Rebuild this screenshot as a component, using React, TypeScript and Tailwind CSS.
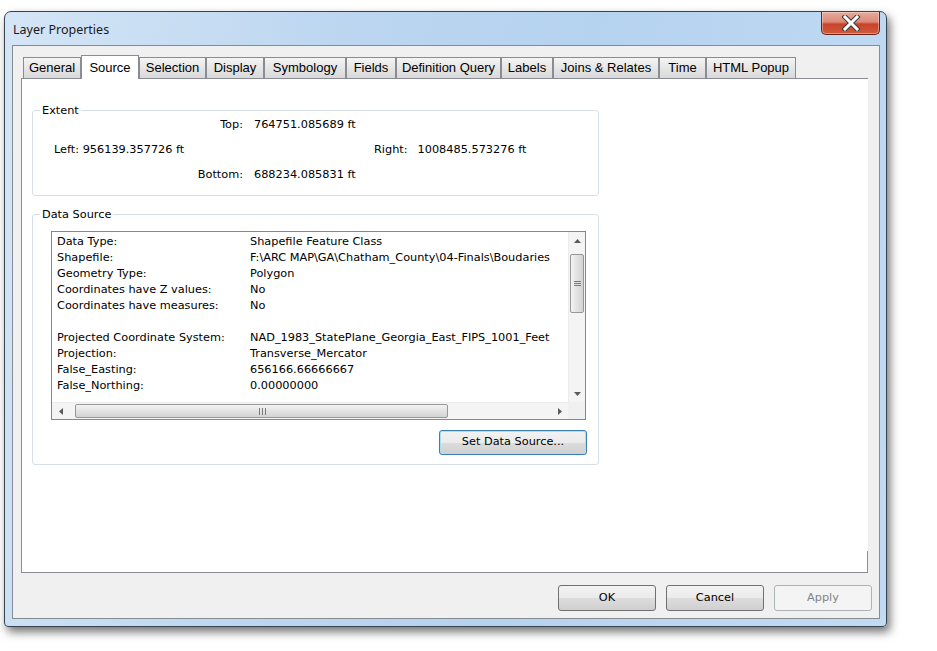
import React from "react";

const tabs = [
  { name: "General", w: "w-[58px]" },
  { name: "Source", w: "w-[58px]", active: true },
  { name: "Selection", w: "w-[67px]" },
  { name: "Display", w: "w-[58px]" },
  { name: "Symbology", w: "w-[82px]" },
  { name: "Fields", w: "w-[50px]" },
  { name: "Definition Query", w: "w-[105px]" },
  { name: "Labels", w: "w-[52px]" },
  { name: "Joins & Relates", w: "w-[106px]" },
  { name: "Time", w: "w-[47px]" },
  { name: "HTML Popup", w: "w-[90px]" },
];

const rows: [string, string][] = [
  ["Data Type:", "Shapefile Feature Class"],
  ["Shapefile:", "F:\\ARC MAP\\GA\\Chatham_County\\04-Finals\\Boudaries"],
  ["Geometry Type:", "Polygon"],
  ["Coordinates have Z values:", "No"],
  ["Coordinates have measures:", "No"],
  ["", ""],
  ["Projected Coordinate System:", "NAD_1983_StatePlane_Georgia_East_FIPS_1001_Feet"],
  ["Projection:", "Transverse_Mercator"],
  ["False_Easting:", "656166.66666667"],
  ["False_Northing:", "0.00000000"],
];

const btn =
  "rounded-[3px] border text-black bg-[linear-gradient(to_bottom,#f2f2f2_0%,#ebebeb_50%,#dddddd_51%,#cfcfcf_100%)]";

function Arrow({ dir }: { dir: "up" | "down" | "left" | "right" }) {
  const pts = {
    up: "0,4 3.5,0 7,4",
    down: "0,0 3.5,4 7,0",
    left: "4,0 0,3.5 4,7",
    right: "0,0 4,3.5 0,7",
  }[dir];
  const vertical = dir === "up" || dir === "down";
  return (
    <svg width={vertical ? 7 : 4} height={vertical ? 4 : 7} viewBox={vertical ? "0 0 7 4" : "0 0 4 7"}>
      <polygon points={pts} fill="#5a5a5a" />
    </svg>
  );
}

function CloseButton() {
  return (
    <div className="absolute right-[6px] top-0 w-[59px] h-[23px] rounded-b-[5px] border border-t-0 border-[#6b2418] bg-[linear-gradient(to_bottom,#e9a99b_0%,#dc8a78_45%,#c8432a_55%,#cf5a3c_100%)] flex items-center justify-center shadow-[inset_0_0_0_1px_rgba(255,255,255,0.35)]">
      <svg width="20" height="16" viewBox="0 0 20 16">
        <path d="M4 2 L16 14 M16 2 L4 14" stroke="#3b3b3b" strokeWidth="5" strokeLinecap="square" />
        <path d="M4 2 L16 14 M16 2 L4 14" stroke="#ffffff" strokeWidth="3" strokeLinecap="square" />
      </svg>
    </div>
  );
}

function ScrollV() {
  return (
    <div className="w-[17px] flex flex-col bg-[#f4f4f4] border-l border-[#ececec]">
      <div className="h-[17px] flex items-center justify-center">
        <Arrow dir="up" />
      </div>
      <div className="mt-[5px] mx-[1px] h-[59px] rounded-[2px] border border-[#979797] bg-[linear-gradient(to_right,#f3f3f3,#e2e2e2_50%,#d3d3d3)] flex flex-col items-center justify-center gap-[1px]">
        <div className="w-[7px] h-px bg-[#7a7a7a]" />
        <div className="w-[7px] h-px bg-[#7a7a7a]" />
        <div className="w-[7px] h-px bg-[#7a7a7a]" />
      </div>
      <div className="flex-1" />
      <div className="h-[17px] flex items-center justify-center">
        <Arrow dir="down" />
      </div>
    </div>
  );
}

function ScrollH() {
  return (
    <div className="h-[17px] flex">
      <div className="flex-1 flex bg-[#f4f4f4] border-t border-[#ececec]">
        <div className="w-[17px] flex items-center justify-center">
          <Arrow dir="left" />
        </div>
        <div className="ml-[6px] my-[1px] w-[373px] rounded-[2px] border border-[#979797] bg-[linear-gradient(to_bottom,#f3f3f3,#e2e2e2_50%,#d3d3d3)] flex items-center justify-end pr-[181px] gap-[2px]">
          <div className="w-px h-[7px] bg-[#7a7a7a]" />
          <div className="w-px h-[7px] bg-[#7a7a7a]" />
          <div className="w-px h-[7px] bg-[#7a7a7a]" />
        </div>
        <div className="flex-1" />
        <div className="w-[17px] flex items-center justify-center">
          <Arrow dir="right" />
        </div>
      </div>
      <div className="w-[17px] bg-[#f0f0f0]" />
    </div>
  );
}

export default function App() {
  return (
    <div className="w-[937px] h-[651px] bg-white pl-[4px] pt-[11px] font-['DejaVu_Sans',sans-serif] text-[11.3px] text-black">
      <div className="w-[883px] h-[616px] flex flex-col rounded-t-[7px] rounded-b-[4px] border border-[#37434f] bg-[linear-gradient(100deg,#d4e5f6_0%,#bcd6f0_35%,#b5d2ef_60%,#c2dbf3_100%)] shadow-[3px_5px_10px_rgba(0,0,0,0.55)]">
        {/* title bar */}
        <div className="relative h-[33px] shrink-0 flex items-center pl-[8px] pt-[4px]">
          <span className="font-['Noto_Sans',sans-serif] text-[12.5px] text-[#1a1a1a]">Layer Properties</span>
          <CloseButton />
        </div>

        {/* client */}
        <div className="ml-[7px] w-[868px] h-[574px] border border-[#858b93] bg-[#f0f0f0] flex flex-col">
          {/* tabs */}
          <div className="relative z-10 flex items-end h-[32px] pt-[9px] pl-[10px] font-['Liberation_Sans',sans-serif] text-[13px]">
            {tabs.map((t) =>
              t.active ? (
                <div
                  key={t.name}
                  className={`${t.w} h-[24px] -mb-px bg-white border border-b-0 border-[#898c95] flex justify-center pt-[2px]`}
                >
                  {t.name}
                </div>
              ) : (
                <div
                  key={t.name}
                  className={`${t.w} h-[21px] border border-b-0 border-[#898c95] bg-[linear-gradient(to_bottom,#f4f4f4,#e6e6e6_50%,#d9d9d9)] flex items-center justify-center`}
                >
                  {t.name}
                </div>
              )
            )}
          </div>

          {/* panel */}
          <div className="ml-[8px] w-[847px] h-[495px] bg-white border border-r-0 border-[#898c95] flex flex-col">
            <fieldset className="mt-[25px] ml-[10px] w-[567px] rounded-[3px] border border-[#d5dfe5] pb-[12px]">
              <legend className="ml-[7px] px-[2px] leading-[13px]">Extent</legend>
              <div className="flex h-[16px] items-center">
                <span className="w-[210px] text-right">Top:</span>
                <span className="ml-[11px]">764751.085689 ft</span>
              </div>
              <div className="flex h-[16px] items-center mt-[9px] pl-[21px]">
                <span className="w-[320px]">Left: 956139.357726 ft</span>
                <span>Right:</span>
                <span className="ml-[10px]">1008485.573276 ft</span>
              </div>
              <div className="flex h-[16px] items-center mt-[9px]">
                <span className="w-[210px] text-right">Bottom:</span>
                <span className="ml-[11px]">688234.085831 ft</span>
              </div>
            </fieldset>

            <fieldset className="mt-[12px] ml-[10px] w-[567px] rounded-[3px] border border-[#d5dfe5] pb-[9px]">
              <legend className="ml-[7px] px-[2px] leading-[13px]">Data Source</legend>
              <div className="mt-[10px] ml-[18px] w-[535px] h-[189px] border border-[#828790] flex flex-col">
                <div className="flex h-[170px]">
                  <div className="flex-1 overflow-hidden pt-[2px] pl-[5px]">
                    {rows.map(([k, v], i) => (
                      <div key={i} className="flex h-[16px] items-center whitespace-nowrap">
                        <span className="w-[193px] shrink-0">{k}</span>
                        <span>{v}</span>
                      </div>
                    ))}
                  </div>
                  <ScrollV />
                </div>
                <ScrollH />
              </div>
              <div className="flex justify-end mt-[10px] mr-[11px]">
                <button className="w-[148px] h-[25px] rounded-[3px] border border-[#3c7fb1] shadow-[inset_0_0_0_1px_#a6e0f7] bg-[linear-gradient(to_bottom,#f2f2f2_0%,#ebebeb_50%,#dddddd_51%,#cfcfcf_100%)]">
                  Set Data Source...
                </button>
              </div>
            </fieldset>

            <div className="flex-1" />
            <div className="flex justify-end">
              <div className="w-px h-[21px] bg-[#898c95]" />
            </div>
          </div>

          {/* buttons */}
          <div className="flex justify-end gap-[10px] mt-[12px] mr-[7px]">
            <button className={`${btn} w-[98px] h-[26px] border-[#707070]`}>OK</button>
            <button className={`${btn} w-[98px] h-[26px] border-[#707070]`}>Cancel</button>
            <button className="w-[98px] h-[26px] rounded-[3px] border border-[#adb2b5] bg-[#f4f4f4] text-[#838383]">
              Apply
            </button>
          </div>
        </div>
      </div>
    </div>
  );
}
